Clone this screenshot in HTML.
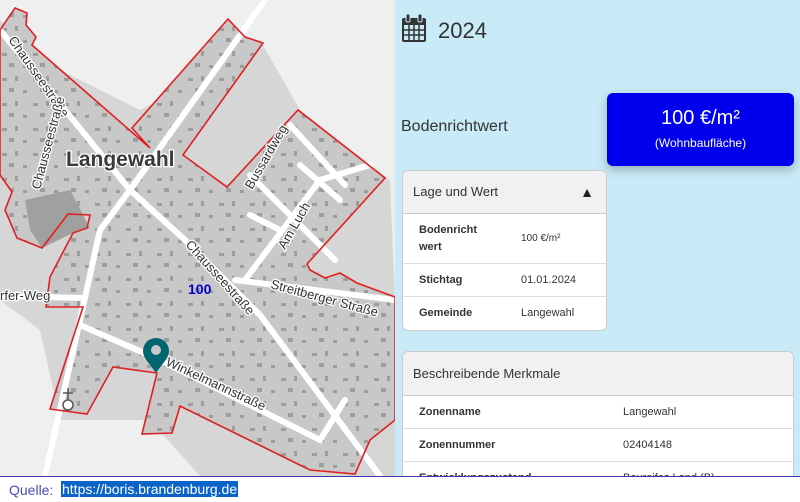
<!DOCTYPE html>
<html><head><meta charset="utf-8"><style>
*{margin:0;padding:0;box-sizing:border-box}
body{width:800px;height:502px;overflow:hidden;background:#fff;font-family:"Liberation Sans",Arial,sans-serif;position:relative}
#map{position:absolute;left:0;top:0;width:395px;height:476px;background:#efefef;overflow:hidden}
#panel{position:absolute;left:395px;top:0;width:405px;height:476px;background:#c9eaf7;overflow:hidden;color:#333}
.card{position:absolute;background:#fff;border:1px solid #ccc;border-radius:6px;overflow:hidden}
.hd{background:#f1f1f1;border-bottom:1px solid #ccc;font-size:13px;color:#333;padding-left:10px;position:relative}
.row{border-bottom:1px solid #ddd;font-size:11px;position:relative}
.row b{position:absolute;left:16px;color:#333}
.row span{position:absolute;color:#333}
#foot{position:absolute;left:0;top:476px;width:800px;height:26px;border-top:1px solid #3b3bb0;font-size:14px}
</style></head><body>
<div id="map">
<svg width="395" height="476" viewBox="0 0 395 476">
<defs>
<pattern id="b" width="31" height="25" patternUnits="userSpaceOnUse">
<rect x="2" y="3" width="5" height="3" fill="#8a8a8a"/>
<rect x="15" y="1" width="3" height="5" fill="#8a8a8a"/>
<rect x="9" y="13" width="5" height="4" fill="#8a8a8a"/>
<rect x="23" y="15" width="4" height="3" fill="#8a8a8a"/>
</pattern>
</defs>
<rect width="395" height="476" fill="#efefef"/>
<polygon points="0,20 40,60 70,75 140,110 200,80 230,60 260,40 300,110 390,180 395,300 395,476 200,476 150,420 100,420 60,420 40,330 0,300" fill="#d6d6d6"/>
<polygon points="15,8 27,13 26,25 36,37 32,45 150,148 132,128 228,19 245,37 263,43 183,155 227,187 298,110 385,178 307,264 310,270 325,278 340,273 357,283 395,297 395,420 370,440 355,474 310,470 180,406 172,433 142,434 157,373 113,367 87,414 50,409 83,307 46,307 50,277 73,233 87,228 90,215 68,214 42,248 17,238 5,210 12,192 0,175 0,30" fill="#c8c8c8"/>
<polygon points="15,8 27,13 26,25 36,37 32,45 150,148 132,128 228,19 245,37 263,43 183,155 227,187 298,110 385,178 307,264 310,270 325,278 340,273 357,283 395,297 395,420 370,440 355,474 310,470 180,406 172,433 142,434 157,373 113,367 87,414 50,409 83,307 46,307 50,277 73,233 87,228 90,215 68,214 42,248 17,238 5,210 12,192 0,175 0,30" fill="url(#b)" opacity="0.7"/>
<polygon points="25,200 70,190 90,228 73,233 42,248 30,230" fill="#a0a0a0"/>
<g stroke="#fff" stroke-width="6" fill="none" stroke-linecap="round">
<path d="M0,30 L130,190 L185,240 L260,315 L380,476"/>
<path d="M265,0 L130,190 L100,230 L80,320 L45,476"/>
<path d="M80,325 L160,360 L320,440 L345,400"/>
<path d="M0,296 L85,298"/>
<path d="M235,280 L395,300"/>
<path d="M245,280 L320,180 L370,165"/>
<path d="M250,175 L335,260"/>
<path d="M290,125 L345,185"/>
<path d="M300,165 L340,200"/>
<path d="M250,215 L280,230"/>
</g>
<polygon points="15,8 27,13 26,25 36,37 32,45 150,148 132,128 228,19 245,37 263,43 183,155 227,187 298,110 385,178 307,264 310,270 325,278 340,273 357,283 395,297 395,420 370,440 355,474 310,470 180,406 172,433 142,434 157,373 113,367 87,414 50,409 83,307 46,307 50,277 73,233 87,228 90,215 68,214 42,248 17,238 5,210 12,192 0,175 0,30" fill="none" stroke="#e02020" stroke-width="1.6"/>
<g fill="#333" font-family="'Liberation Sans',sans-serif" font-size="13" stroke="#fff" stroke-width="2.5" paint-order="stroke">
<text x="66" y="166" font-size="21" font-weight="bold" fill="#3a3a3a">Langewahl</text>
<text transform="translate(8,40) rotate(55)">Chausseestraße</text>
<text transform="translate(40,190) rotate(-75)">Chausseestraße</text>
<text transform="translate(185,245) rotate(48)">Chausseestraße</text>
<text transform="translate(252,190) rotate(-60)">Bussardweg</text>
<text transform="translate(285,250) rotate(-60)">Am Luch</text>
<text transform="translate(270,288) rotate(15)">Streitberger Straße</text>
<text transform="translate(165,365) rotate(25)">Winkelmannstraße</text>
<text x="0" y="300">rfer-Weg</text>
<text x="188" y="294" fill="#0000cc" font-weight="bold" font-size="14" stroke="none">100</text>
</g>
<circle cx="68" cy="405" r="5" fill="#fff" stroke="#555" stroke-width="1.5"/>
<path d="M68,388 V400 M63,393 H73" stroke="#555" stroke-width="1.5"/>
<path d="M156,373 C150,364 143,358 143,351 A13,13 0 0 1 169,351 C169,358 162,364 156,373 Z" fill="#00656f"/>
<circle cx="156" cy="350" r="5" fill="#c8c8c8"/>
</svg>
</div>
<div id="panel">
<svg style="position:absolute;left:6px;top:13px" width="26" height="30" viewBox="0 0 26 30">
<rect x="1" y="5" width="24" height="24" rx="2" fill="#333"/>
<g fill="#c9eaf7"><rect x="3" y="12" width="20" height="15"/></g>
<g stroke="#333" stroke-width="1.5"><path d="M8,12V27M13,12V27M18,12V27M3,17H23M3,22H23"/></g>
<rect x="5" y="1" width="4" height="8" rx="1.5" fill="#333" stroke="#c9eaf7" stroke-width="1"/>
<rect x="17" y="1" width="4" height="8" rx="1.5" fill="#333" stroke="#c9eaf7" stroke-width="1"/>
</svg>
<div style="position:absolute;left:43px;top:18px;font-size:22px;color:#333">2024</div>
<div style="position:absolute;left:6px;top:118px;font-size:16px;color:#333">Bodenrichtwert</div>
<div style="position:absolute;left:212px;top:93px;width:187px;height:73px;background:#0000ee;border-radius:6px;box-shadow:0 4px 10px rgba(0,0,0,0.25);color:#fff;text-align:center">
<div style="font-size:20px;margin-top:14px">100 €/m²</div>
<div style="font-size:12px;margin-top:6px">(Wohnbaufläche)</div></div>
<div class="card" style="left:7px;top:170px;width:205px;height:161px">
<div class="hd" style="height:43px;line-height:42px">Lage und Wert<span style="position:absolute;right:12px;font-size:14px;color:#222">▲</span></div>
<div class="row" style="height:50px"><b style="top:8px;line-height:17px">Bodenricht<br>wert</b><span style="left:118px;top:19px;font-size:10px">100 €/m²</span></div>
<div class="row" style="height:33px;line-height:32px"><b>Stichtag</b><span style="left:118px">01.01.2024</span></div>
<div class="row" style="height:33px;line-height:32px;border:none"><b>Gemeinde</b><span style="left:118px">Langewahl</span></div>
</div>
<div class="card" style="left:7px;top:351px;width:392px;height:140px">
<div class="hd" style="height:44px;line-height:43px">Beschreibende Merkmale</div>
<div class="row" style="height:33px;line-height:33px"><b>Zonenname</b><span style="left:220px">Langewahl</span></div>
<div class="row" style="height:33px;line-height:33px"><b>Zonennummer</b><span style="left:220px">02404148</span></div>
<div class="row" style="height:33px;line-height:33px"><b>Entwicklungszustand</b><span style="left:220px">Baureifes Land (B)</span></div>
</div>
</div>
<div id="foot"><span style="position:absolute;left:9px;top:5px;color:#4a4ab8">Quelle:</span><span style="position:absolute;left:61px;top:4px;background:#0a64c8;color:#fff;padding:0 1px">https://boris.brandenburg.de</span></div>
</body></html>
